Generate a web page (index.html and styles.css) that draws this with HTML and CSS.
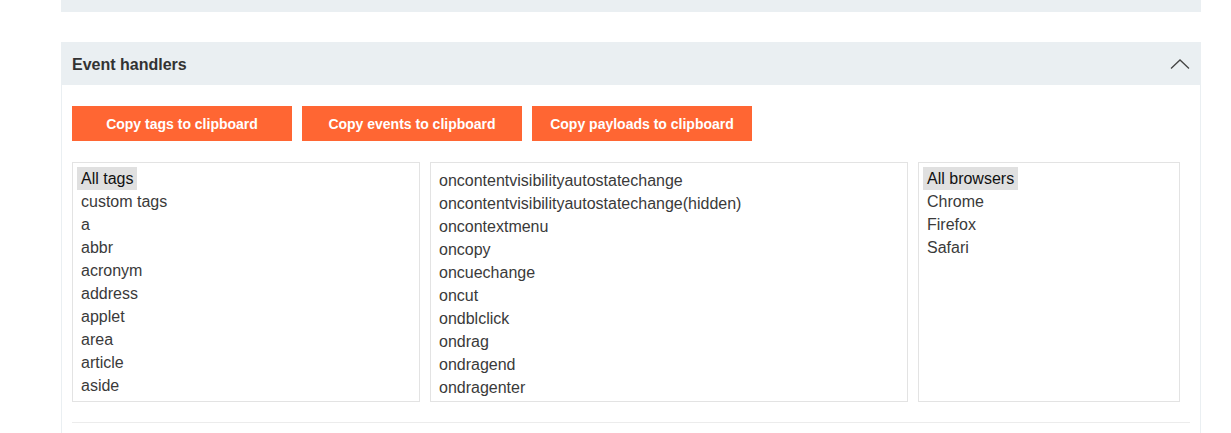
FILE: index.html
```html
<!DOCTYPE html>
<html>
<head>
<meta charset="utf-8">
<link rel="stylesheet" href="styles.css">
</head>
<body>
<div class="top-bar"></div>
<section class="panel">
  <div class="panel-header">
    <h2 class="panel-title">Event handlers</h2>
    <svg class="chevron" width="20" height="12" viewBox="0 0 20 12"><path d="M1 10.5 L10 2 L19 10.5" fill="none" stroke="#444" stroke-width="1.3"/></svg>
  </div>
  <div class="panel-body">
    <div class="buttons">
      <button class="btn">Copy tags to clipboard</button>
      <button class="btn">Copy events to clipboard</button>
      <button class="btn">Copy payloads to clipboard</button>
    </div>
    <div class="lists">
      <div class="listbox tags">
        <div class="opt selected">All tags</div>
        <div class="opt">custom tags</div>
        <div class="opt">a</div>
        <div class="opt">abbr</div>
        <div class="opt">acronym</div>
        <div class="opt">address</div>
        <div class="opt">applet</div>
        <div class="opt">area</div>
        <div class="opt">article</div>
        <div class="opt">aside</div>
      </div>
      <div class="listbox events">
        <div class="scroller">
          <div class="opt">oncontentvisibilityautostatechange</div>
          <div class="opt">oncontentvisibilityautostatechange(hidden)</div>
          <div class="opt">oncontextmenu</div>
          <div class="opt">oncopy</div>
          <div class="opt">oncuechange</div>
          <div class="opt">oncut</div>
          <div class="opt">ondblclick</div>
          <div class="opt">ondrag</div>
          <div class="opt">ondragend</div>
          <div class="opt">ondragenter</div>
        </div>
      </div>
      <div class="listbox browsers">
        <div class="opt selected">All browsers</div>
        <div class="opt">Chrome</div>
        <div class="opt">Firefox</div>
        <div class="opt">Safari</div>
      </div>
    </div>
    <div class="divider"></div>
  </div>
</section>
</body>
</html>
```
FILE: styles.css
```css
html, body {
  margin: 0;
  padding: 0;
  background: #fff;
  font-family: "Liberation Sans", Arial, sans-serif;
}
.top-bar {
  margin-left: 61px;
  width: 1140px;
  height: 12px;
  background: #eaeff2;
}
.panel {
  margin-top: 30px;
  margin-left: 61px;
  width: 1140px;
}
.panel-header {
  height: 43px;
  background: #eaeff2;
  display: flex;
  align-items: center;
  justify-content: space-between;
  padding: 0 11px 0 11px;
  box-sizing: border-box;
}
.panel-title {
  margin: 2px 0 0 0;
  font-size: 16px;
  font-weight: bold;
  color: #333;
}
.chevron {
  display: block;
  margin-top: 0;
}
.panel-body {
  border-left: 1px solid #eaeff2;
  border-right: 1px solid #eaeff2;
  padding: 21px 10px 0 10px;
  box-sizing: border-box;
  height: 348px;
}
.buttons {
  display: flex;
  gap: 10px;
}
.btn {
  width: 220px;
  height: 35px;
  border: none;
  margin: 0;
  padding: 0;
  background: #ff6633;
  color: #fff;
  font-family: "Liberation Sans", Arial, sans-serif;
  font-size: 14px;
  font-weight: bold;
}
.lists {
  display: flex;
  gap: 10px;
  margin-top: 21px;
}
.listbox {
  height: 240px;
  border: 1px solid #e3e3e3;
  box-sizing: border-box;
  padding: 4px;
  overflow: hidden;
  font-size: 16px;
  line-height: 23px;
  color: #3a3a3a;
}
.tags { width: 348px; }
.events { width: 478px; }
.browsers { width: 262px; }
.events .scroller {
  margin-top: 2px;
}
.opt {
  height: 23px;
  padding: 0 4px;
  white-space: nowrap;
}
.opt.selected {
  display: table;
  background: #e0e0e0;
  color: #111;
}
.divider {
  margin-top: 20px;
  border-top: 1px solid #ececec;
}
```
